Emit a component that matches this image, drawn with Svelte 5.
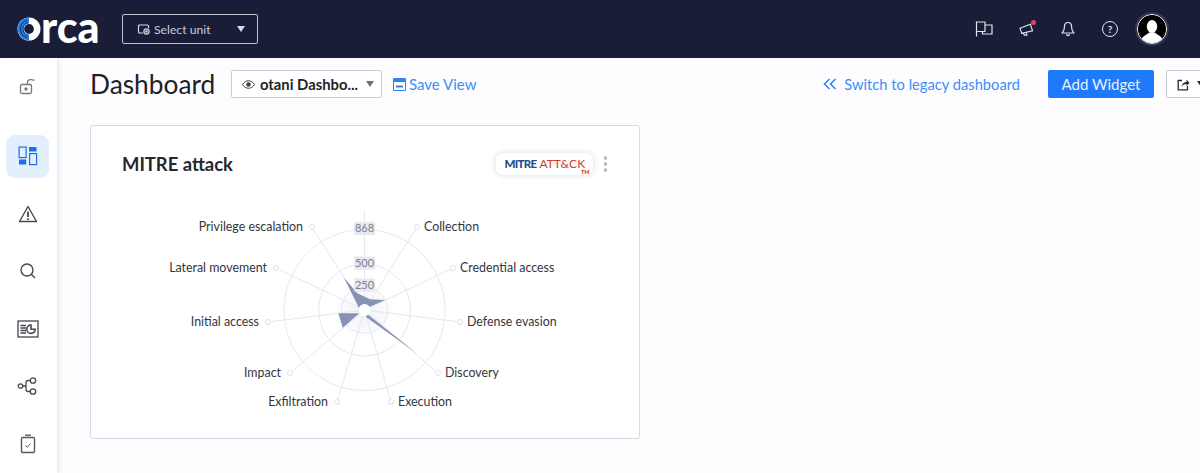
<script>
  const navItems = ['unlock', 'dash', 'alert', 'search', 'report', 'graph', 'tasks'];

  const cx = 364.5;
  const cy = 310;
  const spokes = [
    { label: 'Privilege escalation', x: 312, y: 227, anchor: 'end' },
    { label: 'Collection', x: 417, y: 227, anchor: 'start' },
    { label: 'Credential access', x: 453, y: 268, anchor: 'start' },
    { label: 'Defense evasion', x: 460, y: 322, anchor: 'start' },
    { label: 'Discovery', x: 438, y: 373, anchor: 'start' },
    { label: 'Execution', x: 391, y: 402, anchor: 'start' },
    { label: 'Exfiltration', x: 337, y: 402, anchor: 'end' },
    { label: 'Impact', x: 290, y: 373, anchor: 'end' },
    { label: 'Initial access', x: 268, y: 322, anchor: 'end' },
    { label: 'Lateral movement', x: 276, y: 268, anchor: 'end' }
  ];
  const ticks = [
    { text: '868', y: 228.5 },
    { text: '500', y: 263 },
    { text: '250', y: 285 }
  ];
</script>

<div class="page">
  <header class="topbar">
    <div class="logo">
      <svg class="logo-o" viewBox="0 0 24 24" width="24" height="24" aria-hidden="true">
        <circle cx="12" cy="12" r="8.2" fill="none" stroke="#fff" stroke-width="6.6" />
        <path d="M12 .8A11.2 11.2 0 0 0 12 23.2V17.6A5.6 5.6 0 0 1 12 6.4Z" fill="#1b7cf0" />
        <path d="M10 3.5A8.8 8.8 0 0 0 10 20.5M10.5 6A6.3 6.3 0 0 0 10.5 18" fill="none" stroke="#1a1d38" stroke-width=".8" />
      </svg>
      <span>rca</span>
    </div>
    <button class="unit">
      <svg width="14" height="14" viewBox="0 0 14 14" fill="none" stroke="#d5d7e2" stroke-width="1.2" aria-hidden="true">
        <path d="M6 11H2.5a1 1 0 0 1-1-1V4a1 1 0 0 1 1-1h8a1 1 0 0 1 1 1v2" />
        <circle cx="9.5" cy="9.5" r="2.6" />
        <circle cx="9.5" cy="9.5" r=".7" fill="#d5d7e2" />
      </svg>
      <span>Select unit</span>
      <i class="caret"></i>
    </button>
    <div class="top-icons">
      <span class="top-icon">
        <svg width="18" height="16" viewBox="0 0 18 16" fill="none" stroke="#e4e5ec" stroke-width="1.2" aria-hidden="true">
          <path d="M1.5 15.500V1H10V10.500H1.500M10 4H17V13H7.500V10.500" />
        </svg>
      </span>
      <span class="top-icon horn">
        <svg width="15" height="13" viewBox="0 0 17 15" fill="none" stroke="#e4e5ec" stroke-width="1.300" aria-hidden="true">
          <path d="M1 6L13 1.500L15.500 9L3 12ZM5 11.500L6 14H9L8.200 10.800" />
        </svg>
        <i class="red-dot"></i>
      </span>
      <span class="top-icon">
        <svg width="14" height="16" viewBox="0 0 14 16" fill="none" stroke="#e4e5ec" stroke-width="1.200" aria-hidden="true">
          <path d="M7 1.500C4.300 1.500 3.400 3.800 3.400 6C3.400 9 2.600 10.400 1.300 12H12.700C11.400 10.400 10.600 9 10.600 6C10.600 3.800 9.700 1.500 7 1.500ZM5.500 13.200C5.800 15 8.200 15 8.500 13.200" />
        </svg>
      </span>
      <span class="top-icon"><span class="help">?</span></span>
      <span class="top-icon">
        <span class="avatar">
          <svg viewBox="0 0 28 28" width="28" height="28" aria-hidden="true">
            <circle cx="14" cy="14" r="14" fill="#000" />
            <ellipse cx="14" cy="11.500" rx="5.200" ry="6.400" fill="#fff" />
            <path d="M3.500 24C6 20 9.500 19.500 11 17.500H17C18.500 19.500 22 20 24.500 24A14 14 0 0 1 3.500 24Z" fill="#fff" />
          </svg>
        </span>
      </span>
    </div>
  </header>

  <div class="body">
    <nav class="sidebar">
      {#each navItems as item}
        <div class="nav-item" class:active={item === 'dash'}>
          {#if item === 'unlock'}
            <svg width="20" height="20" viewBox="0 0 20 20" fill="none" stroke="#77797f" stroke-width="1.300">
              <rect x="2.500" y="7.500" width="11" height="9" rx="1.500" />
              <circle cx="8" cy="12" r="1" fill="#77797f" />
              <path d="M9.500 7.500V5C9.500 2.500 14 2 15 3.200L16.500 3.200" />
            </svg>
          {:else if item === 'dash'}
            <svg width="20" height="20" viewBox="0 0 20 20" fill="none" stroke="#1c6fe8" stroke-width="1.200">
              <rect x="1.100" y="1.100" width="7" height="10.500" />
              <rect x="1" y="13.500" width="7.200" height="5" fill="#1c6fe8" stroke="none" />
              <rect x="11" y="1" width="7.500" height="4.500" fill="#1c6fe8" stroke="none" />
              <rect x="11.600" y="7.600" width="7" height="11" />
            </svg>
          {:else if item === 'alert'}
            <svg width="20" height="18" viewBox="0 0 20 18" fill="none" stroke="#45484f" stroke-width="1.400">
              <path d="M10 1.500L18.500 16.500H1.500Z" stroke-linejoin="round" />
              <path d="M10 6.500V12M10 13.300V15" stroke-width="1.800" />
            </svg>
          {:else if item === 'search'}
            <svg width="18" height="18" viewBox="0 0 18 18" fill="none" stroke="#45484f" stroke-width="1.400">
              <circle cx="8" cy="8" r="6" />
              <path d="M12.500 12.500L16 16" />
            </svg>
          {:else if item === 'report'}
            <svg width="22" height="18" viewBox="0 0 22 18" fill="none" stroke="#45484f" stroke-width="1.300">
              <rect x="1" y="1" width="20" height="16" />
              <path d="M3.500 5.500H9M3.500 8H9M3.500 10.500H9M3.500 13H9" />
              <path d="M14 5A4.200 4.200 0 1 0 18.200 9.200H14Z" stroke-width="1.600" />
            </svg>
          {:else if item === 'graph'}
            <svg width="22" height="18" viewBox="0 0 22 18" fill="none" stroke="#45484f" stroke-width="1.300">
              <circle cx="3.500" cy="9" r="2.200" />
              <circle cx="16" cy="3.500" r="2.700" />
              <circle cx="16" cy="14.500" r="2.700" />
              <path d="M5.700 9H9M13.300 3.500H11C9.800 3.500 9 4.300 9 5.500V12.500C9 13.700 9.800 14.500 11 14.500H13.300" />
            </svg>
          {:else}
            <svg width="16" height="20" viewBox="0 0 16 20" fill="none" stroke="#55585f" stroke-width="1.400">
              <rect x="1.500" y="3.500" width="13" height="15" rx="1.200" />
              <path d="M5 1.200H11" />
              <path d="M5.500 11.500L7.300 13.300L10.500 9.500" stroke-width="1" />
            </svg>
          {/if}
        </div>
      {/each}
    </nav>

    <main class="content">
      <div class="toolbar">
        <h1>Dashboard</h1>
        <div class="view-select">
          <svg width="13" height="9" viewBox="0 0 13 9" aria-hidden="true">
            <path d="M.5 4.500C3.500-.5 9.500-.5 12.500 4.500C9.500 9.500 3.500 9.500.5 4.500Z" fill="none" stroke="#3c3f48" />
            <circle cx="6.500" cy="4.500" r="2.200" fill="#3c3f48" />
          </svg>
          <b>otani Dashbo...</b>
          <i class="caret gray"></i>
        </div>
        <a class="save">
          <svg width="13" height="13" viewBox="0 0 13 13" aria-hidden="true">
            <path d="M.5.500H12.500V12.500H.5Z" fill="none" stroke="#2f83f6" />
            <path d="M1 1H12V4H1ZM3 7.500H10V9.500H3Z" fill="#2f83f6" />
          </svg>
          Save View
        </a>
        <a class="legacy">
          <svg width="14" height="12" viewBox="0 0 14 12" fill="none" stroke="#2f83f6" stroke-width="1.600" aria-hidden="true">
            <path d="M6.500 1L1.500 6L6.500 11M12.500 1L7.500 6L12.500 11" />
          </svg>
          Switch to legacy dashboard
        </a>
        <button class="add">Add Widget</button>
        <button class="share">
          <svg width="13" height="13" viewBox="0 0 13 13" fill="none" stroke="#2b2d33" stroke-width="1.300" aria-hidden="true">
            <path d="M5 2.500H1.200V11.800H10.500V8" />
            <path d="M4.500 8.500C5 5.500 7 4 9.500 4V1.500L12.500 5L9.500 8V6C7.500 6 5.800 6.800 4.500 8.500Z" fill="#2b2d33" stroke="none" />
          </svg>
          <i class="caret dark"></i>
        </button>
      </div>

      <section class="card">
        <div class="card-head">
          <h2>MITRE attack</h2>
          <div class="badge">
            <b>MITRE</b><span>ATT&amp;CK</span><sub>TM</sub>
          </div>
          <div class="dots"><i></i><i></i><i></i></div>
        </div>
      </section>

      <svg class="radar" width="639" height="473" viewBox="0 0 639 473" aria-label="MITRE attack radar chart">
        <defs>
          <radialGradient id="glow">
            <stop offset="0" stop-color="#f1f1f6" />
            <stop offset="1" stop-color="#f1f1f6" stop-opacity="0" />
          </radialGradient>
        </defs>
        <circle cx={cx} cy={cy} r="30" fill="url(#glow)" />
        <g fill="none" stroke="#e6e7f1" stroke-width="1">
          <circle cx={cx} cy={cy} r="80.500" />
          <circle cx={cx} cy={cy} r="46" />
          <circle cx={cx} cy={cy} r="23" />
          <line x1={cx} y1="210" x2={cx} y2={cy} />
          {#each spokes as s}
            <line x1={s.x} y1={s.y} x2={cx} y2={cy} />
          {/each}
        </g>
        <g fill="#8593b3">
          <path d="M344 277.700L357.300 293.300L370 299.300L385 300L370 306.700L360 310Z" />
          <path d="M338.300 313.300L342.700 327.700L359.300 313.300Z" />
          <path d="M367.300 314L416.700 353.300L366 317Z" />
        </g>
        <circle cx={cx} cy={cy} r="6" fill="#fff" />
        {#each spokes as s}
          <circle cx={s.x} cy={s.y} r="2.500" fill="#fff" stroke="#e0e1eb" />
          <text
            x={s.anchor === 'end' ? s.x - 9 : s.x + 7}
            y={s.y + 3.500}
            text-anchor={s.anchor}
            class="axis">{s.label}</text>
        {/each}
        {#each ticks as t}
          <rect x={cx - 10.500} y={t.y - 6.500} width="21" height="13" fill="#e6e7ef" rx="1" />
          <text x={cx} y={t.y + 3.500} text-anchor="middle" class="tick">{t.text}</text>
        {/each}
      </svg>
    </main>
  </div>
</div>

<style>
  :global(body) {
    margin: 0;
    overflow: hidden;
    font-family: "Lato", "Open Sans", sans-serif;
  }

  .page {
    width: 1200px;
    height: 473px;
    overflow: hidden;
    display: flex;
    flex-direction: column;
    background: #fdfdff;
  }

  .topbar {
    height: 58px;
    flex: none;
    background: #1a1d38;
    display: flex;
    align-items: center;
    box-sizing: border-box;
    padding-left: 17px;
  }

  .logo {
    width: 105px;
    display: flex;
    align-items: center;
    color: #fff;
    font: 900 43px/1 "Lato", sans-serif;
    letter-spacing: 0;
  }

  .logo span {
    margin-top: -6px;
    margin-left: 0;
  }

  .logo-o {
    flex: none;
  }

  .unit {
    width: 136px;
    height: 30px;
    box-sizing: border-box;
    display: flex;
    align-items: center;
    gap: 3px;
    padding: 0 14px;
    background: transparent;
    border: 1px solid #bfc1cc;
    border-radius: 2px;
    color: #c9cbd6;
    font: 12.200px "Lato", sans-serif;
  }

  .caret {
    width: 0;
    height: 0;
    border-left: 4.500px solid transparent;
    border-right: 4.500px solid transparent;
    border-top: 6px solid #d8d9e2;
  }

  .unit .caret {
    margin-left: auto;
    margin-right: -2px;
  }

  .caret.gray {
    border-top-color: #6f7076;
  }

  .caret.dark {
    border-top-color: #26282e;
  }

  .top-icons {
    margin-left: auto;
    margin-right: 27px;
    display: flex;
    align-items: center;
  }

  .top-icon {
    width: 42px;
    display: flex;
    align-items: center;
    justify-content: center;
  }

  .horn {
    position: relative;
  }

  .red-dot {
    position: absolute;
    top: -3px;
    right: 11px;
    width: 5px;
    height: 5px;
    border-radius: 50%;
    background: #f0404f;
  }

  .help {
    width: 14px;
    height: 14px;
    border: 1.200px solid #e4e5ec;
    border-radius: 50%;
    color: #e4e5ec;
    font: 700 10px/14px "Lato", sans-serif;
    text-align: center;
  }

  .avatar {
    width: 28px;
    height: 28px;
    flex: none;
    border: 1.500px solid #fff;
    border-radius: 50%;
    box-shadow: 0 0 0 2px #343750;
    overflow: hidden;
    display: flex;
  }

  .body {
    flex: 1;
    display: flex;
    min-height: 0;
    position: relative;
  }

  .sidebar {
    width: 57px;
    flex: none;
    box-sizing: border-box;
    background: #fff;
    box-shadow: 1px 0 6px rgba(30, 32, 60, 0.14);
    padding: 6px 0 0 6px;
    display: flex;
    flex-direction: column;
    gap: 14.500px;
    z-index: 1;
  }

  .nav-item {
    width: 43px;
    height: 43px;
    display: flex;
    align-items: center;
    justify-content: center;
    border-radius: 9px;
  }

  .nav-item:first-child {
    height: 46px;
    margin-bottom: 10px;
  }

  .nav-item.active {
    background: #e4effd;
  }

  .content {
    flex: 1;
    min-width: 0;
    padding: 0 0 0 33px;
  }

  .toolbar {
    height: 52px;
    display: flex;
    align-items: center;
    white-space: nowrap;
    margin-top: 0;
  }

  h1 {
    margin: 0 16px 0 0;
    width: 125px;
    font: 400 26.300px "Lato", sans-serif;
    color: #1f2026;
  }

  .view-select {
    width: 151px;
    height: 28px;
    box-sizing: border-box;
    display: flex;
    align-items: center;
    gap: 5px;
    padding: 0 7px 0 10px;
    background: #fff;
    border: 1px solid #c9cbd6;
    border-radius: 2px;
    font-size: 14.800px;
    color: #22242a;
  }

  .view-select .caret {
    margin-left: auto;
  }

  .save,
  .legacy {
    display: flex;
    align-items: center;
    color: #3e8ef7;
    font-size: 15px;
  }

  .save {
    margin-left: 11px;
    gap: 3px;
  }

  .legacy {
    margin-left: auto;
    gap: 7px;
    font-size: 14.700px;
  }

  .add {
    margin-left: 28px;
    width: 106px;
    height: 28px;
    border: 0;
    border-radius: 2px;
    background: #1f7afb;
    color: #e6f0ff;
    font: 15px "Lato", sans-serif;
  }

  .share {
    margin-left: 12px;
    margin-right: -10px;
    width: 44px;
    height: 28px;
    flex: none;
    box-sizing: border-box;
    display: flex;
    align-items: center;
    gap: 7px;
    padding: 0 0 0 10px;
    background: #fff;
    border: 1px solid #c9cbd6;
    border-radius: 2px;
  }

  .card {
    width: 550px;
    height: 314px;
    box-sizing: border-box;
    margin-top: 15px;
    background: #fff;
    border: 1px solid #d8d9e3;
    border-radius: 3px;
    padding: 0 32px 0 31px;
  }

  .card-head {
    height: 76px;
    display: flex;
    align-items: center;
  }

  h2 {
    margin: 0;
    font: 700 18.400px "Lato", sans-serif;
    color: #26272f;
  }

  .badge {
    margin-left: auto;
    height: 22px;
    width: 97px;
    box-sizing: border-box;
    position: relative;
    display: flex;
    align-items: center;
    gap: 3px;
    padding: 0 0 0 9px;
    border-radius: 7px;
    background: #fff;
    box-shadow: 0 0 6px rgba(40, 40, 70, 0.16);
    font-size: 12px;
    line-height: 10px;
  }

  .badge b {
    color: #1f4f8f;
    font-size: 11.500px;
    font-weight: 900;
    letter-spacing: -0.7px;
  }

  .badge span {
    color: #cf3b2f;
  }

  .badge sub {
    position: absolute;
    right: 3px;
    bottom: 0;
    color: #cf3b2f;
    font-size: 5.500px;
    font-weight: 900;
    line-height: 6px;
  }

  .dots {
    margin-left: 11px;
    display: flex;
    flex-direction: column;
    gap: 2.500px;
  }

  .dots i {
    width: 3.500px;
    height: 3.500px;
    border-radius: 50%;
    background: #b5b7c7;
  }

  .radar {
    position: absolute;
    left: 0;
    top: -58px;
    pointer-events: none;
  }

  .axis {
    font: 12.400px "Lato", sans-serif;
    fill: #33353d;
  }

  .tick {
    font: 11px "Lato", sans-serif;
    fill: #7d7f8d;
  }
</style>
